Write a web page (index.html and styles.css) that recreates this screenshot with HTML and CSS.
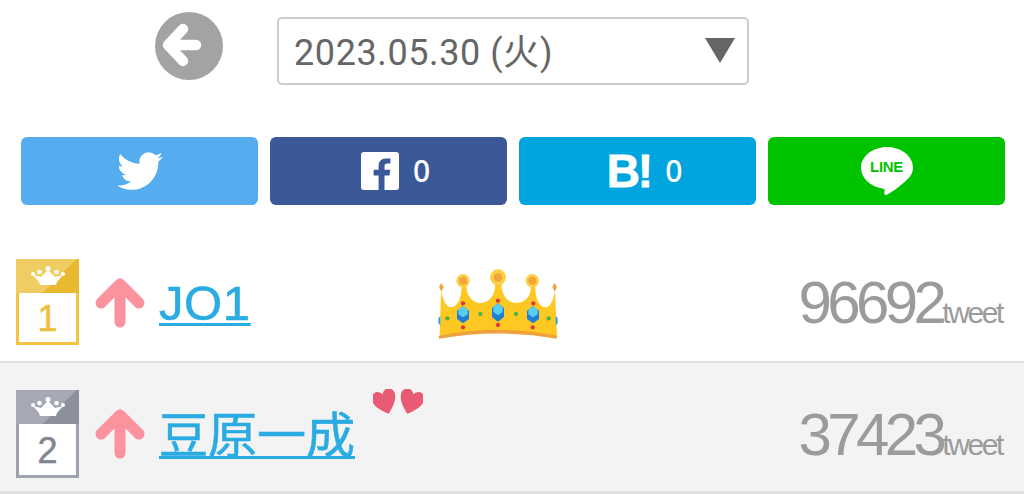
FILE: index.html
```html
<!DOCTYPE html>
<html lang="ja">
<head>
<meta charset="utf-8">
<title>Ranking</title>
<link rel="stylesheet" href="styles.css">
</head>
<body>
<div class="top">
  <svg class="back" viewBox="0 0 68 68"><circle cx="34" cy="34" r="34" fill="#a3a3a3"/><path d="M28 17 13 33l15 16M15 33h26" fill="none" stroke="#fff" stroke-width="10.500" stroke-linecap="round" stroke-linejoin="round"/></svg>
  <div class="select"><span>2023.05.30 (火)</span><i class="caret"></i></div>
</div>
<div class="share">
  <a class="btn tw"><svg class="bird" viewBox="0 0 24 24"><path fill="#fff" d="M23.953 4.57a10 10 0 01-2.825.775 4.958 4.958 0 002.163-2.723c-.951.555-2.005.959-3.127 1.184a4.92 4.92 0 00-8.384 4.482C7.69 8.095 4.067 6.13 1.64 3.162a4.822 4.822 0 00-.666 2.475c0 1.71.87 3.213 2.188 4.096a4.904 4.904 0 01-2.228-.616v.06a4.923 4.923 0 003.946 4.827 4.996 4.996 0 01-2.212.085 4.936 4.936 0 004.604 3.417 9.867 9.867 0 01-6.102 2.105c-.39 0-.779-.023-1.17-.067a13.995 13.995 0 007.557 2.209c9.053 0 13.998-7.496 13.998-13.985 0-.21 0-.42-.015-.63A9.935 9.935 0 0024 4.59z"/></svg></a>
  <a class="btn fb count-btn"><svg class="fbicon" viewBox="0 0 38 38"><rect width="38" height="38" rx="3" fill="#fff"/><path fill="#3b5998" d="M26.500 38V23.500h5l.8-5.800h-5.800v-3.500c0-1.700.5-2.800 2.900-2.800h3V6.600c-.6-.1-2.400-.2-4.400-.2-4.400 0-7.400 2.700-7.400 7.500v3.800h-5v5.800h5V38z" transform="translate(-3 0)"/></svg><span class="num">0</span></a>
  <a class="btn hb count-btn"><span class="hatena">B!</span><span class="num">0</span></a>
  <a class="btn ln"><span class="bubble"><svg class="bubble-bg" viewBox="0 0 52 50"><path fill="#fff" d="M26 0C11.600 0 0 9.300 0 20.800c0 10.300 9.200 19 21.600 20.600 2 .4 2.300 1.300 1.900 3.200-.2 1-.8 4.400 2.300 3.100 3.100-1.300 14-8.700 19.500-14.500C49.700 29.700 52 25.500 52 20.800 52 9.300 40.400 0 26 0z"/></svg><span class="line-text">LINE</span></span></a>
</div>
<div class="row first">
  <div class="badge gold"><div class="badge-top"><svg class="mini" viewBox="0 0 34 20"><path fill="#fff" d="M9 19h16l1-3 6-7-8 2-7-7-7 7-8-2 6 7z"/><circle cx="17" cy="2.500" r="2.500" fill="#fff"/><circle cx="8.500" cy="6" r="2.300" fill="#fff"/><circle cx="25.500" cy="6" r="2.300" fill="#fff"/><circle cx="2" cy="8" r="2" fill="#fff"/><circle cx="32" cy="8" r="2" fill="#fff"/></svg></div><div class="badge-num">1</div></div>
  <svg class="arrow" viewBox="0 0 50 50"><path d="M25 44V6M6 25 25 6l19 19" fill="none" stroke="#fb929e" stroke-width="11" stroke-linecap="round" stroke-linejoin="round"/></svg>
  <a class="name latin">JO1</a>
  <svg class="crown" viewBox="55 40 360 210">
    <path fill="#fcc821" d="M60 245 64 105C70 130 78 155 95 155 115 155 128 120 125 90L140 90C140 120 160 142 183 142 210 142 228 115 226 85L245 85C245 115 262 142 290 142 315 142 338 120 332 90L347 90C345 125 358 155 378 155 392 155 402 130 406 105L412 245Q235 210 60 245Z"/>
    <path fill="#f0a03c" d="M58 240Q235 205 412 240L412 249Q235 218 58 249Z"/>
    <circle cx="130" cy="75" r="20" fill="#fbd044"/><circle cx="130" cy="75" r="12" fill="#f2a53c"/>
    <circle cx="235" cy="65" r="24" fill="#fbd044"/><circle cx="235" cy="65" r="13" fill="#f2a53c"/>
    <circle cx="338" cy="75" r="20" fill="#fbd044"/><circle cx="338" cy="75" r="12" fill="#f2a53c"/>
    <path fill="#f2a53c" d="M65 82l7 12-7 14-7-14zM405 82l7 12-7 14-7-14z"/>
    <path fill="#1f7fd6" d="M130 152l18 13v25l-18 13-18-13v-25zM235 143l18 14v27l-18 14-18-14v-27zM340 152l18 13v25l-18 13-18-13v-25z"/>
    <path fill="#58cdf2" d="M130 152l14 10v14l-14 9-14-9v-14zM235 143l14 11v15l-14 10-14-10v-15zM340 152l14 10v14l-14 9-14-9v-14z"/>
    <path fill="#2fa6e0" d="M62 180l-6 8v14l6 8zM408 180l6 8v14l-6 8z"/>
    <g fill="#e03a40"><circle cx="130" cy="143" r="6.500"/><circle cx="235" cy="135" r="6.500"/><circle cx="341" cy="143" r="6.500"/><circle cx="130" cy="215" r="6.500"/><circle cx="235" cy="208" r="6.500"/><circle cx="339" cy="215" r="6.500"/></g>
    <g fill="#52b440"><circle cx="83" cy="188" r="6.500"/><circle cx="182" cy="175" r="6.500"/><circle cx="289" cy="175" r="6.500"/><circle cx="387" cy="188" r="6.500"/></g>
  </svg>
  <div class="count"><span class="big">96692</span><span class="unit">tweet</span></div>
</div>
<div class="row alt">
  <div class="badge silver"><div class="badge-top"><svg class="mini" viewBox="0 0 34 20"><path fill="#fff" d="M9 19h16l1-3 6-7-8 2-7-7-7 7-8-2 6 7z"/><circle cx="17" cy="2.500" r="2.500" fill="#fff"/><circle cx="8.500" cy="6" r="2.300" fill="#fff"/><circle cx="25.500" cy="6" r="2.300" fill="#fff"/><circle cx="2" cy="8" r="2" fill="#fff"/><circle cx="32" cy="8" r="2" fill="#fff"/></svg></div><div class="badge-num">2</div></div>
  <svg class="arrow" viewBox="0 0 50 50"><path d="M25 44V6M6 25 25 6l19 19" fill="none" stroke="#fb929e" stroke-width="11" stroke-linecap="round" stroke-linejoin="round"/></svg>
  <a class="name">豆原一成</a>
  <svg class="hearts" viewBox="0 0 50 26"><g fill="#e95a74"><path transform="rotate(-18 12 13) translate(0 1) scale(.48 .54)" d="M25 45C5 30 0 20 0 12 0 4 7 0 13 0 18 0 22 3 25 7 28 3 32 0 37 0 43 0 50 4 50 12 50 20 45 30 25 45Z"/><path transform="rotate(18 38 13) translate(26 1) scale(.48 .54)" d="M25 45C5 30 0 20 0 12 0 4 7 0 13 0 18 0 22 3 25 7 28 3 32 0 37 0 43 0 50 4 50 12 50 20 45 30 25 45Z"/></g></svg>
  <div class="count"><span class="big">37423</span><span class="unit">tweet</span></div>
</div>
</body>
</html>
```

FILE: styles.css
```css
* { box-sizing: border-box; }
html, body { margin: 0; padding: 0; }
body {
  width: 1024px;
  height: 494px;
  overflow: hidden;
  background: #fff;
  font-family: "Liberation Sans", "Noto Sans CJK JP", sans-serif;
}
.top {
  display: flex;
  align-items: flex-start;
  padding: 12px 0 0 155px;
  height: 137px;
}
.back { width: 68px; height: 68px; flex: none; }
.select {
  margin: 5px 0 0 54px;
  width: 472px;
  height: 68px;
  border: 2px solid #ccc;
  border-radius: 5px;
  background: #fff;
  display: flex;
  align-items: center;
  justify-content: space-between;
  padding: 0 12px 5px 15px;
  color: #666;
  font-family: Roboto, "Noto Sans CJK JP", sans-serif;
  font-size: 36px;
  letter-spacing: 0.6px;
}
.caret {
  width: 0;
  height: 0;
  margin-top: 3px;
  border-left: 15px solid transparent;
  border-right: 15px solid transparent;
  border-top: 25px solid #666;
}
.share {
  display: grid;
  grid-template-columns: repeat(4, 1fr);
  gap: 12px;
  padding: 0 19px 0 21px;
}
.btn {
  height: 68px;
  border-radius: 6px;
  display: flex;
  align-items: center;
  justify-content: center;
  color: #fff;
}
.count-btn { padding-left: 14px; }
.tw { background: #55acee; }
.fb { background: #3b5998; }
.hb { background: #00a4de; }
.ln { background: #00c300; }
.bird { width: 46px; height: 46px; }
.fbicon { width: 38px; height: 38px; }
.num {
  margin-left: 14px;
  font-family: "Noto Sans", sans-serif;
  font-size: 30px;
  font-weight: 500;
  line-height: 1;
}
.hatena {
  font-family: "Liberation Sans", sans-serif;
  font-weight: 700;
  font-size: 46px;
  line-height: 1;
  letter-spacing: -2px;
  -webkit-text-stroke: 0.8px #fff;
}
.bubble {
  position: relative;
  width: 52px;
  height: 50px;
  display: flex;
  justify-content: center;
  margin-top: 2px;
}
.bubble-bg { width: 52px; height: 50px; }
.line-text {
  position: absolute;
  top: 11px;
  left: 0;
  right: 0;
  text-align: center;
  color: #00c300;
  font-size: 15px;
  font-weight: 700;
  letter-spacing: -0.3px;
  line-height: 18px;
}
.row {
  display: flex;
  align-items: flex-start;
  height: 132px;
  padding: 28px 22px 0 16px;
  border-bottom: 2px solid #e0e0e0;
}
.first { margin-top: 26px; }
.alt {
  background: #f3f3f3;
  border-bottom-width: 3px;
  height: 131px;
  padding-top: 27px;
}
.badge {
  width: 63px;
  height: 86px;
  flex: none;
  border: 3px solid;
  background: #fff;
  display: flex;
  flex-direction: column;
}
.alt .badge { height: 88px; }
.gold { border-color: #f1c542; }
.silver { border-color: #9ea2ae; }
.badge-top {
  height: 34px;
  margin: -3px -3px 0;
  display: flex;
  justify-content: center;
  align-items: flex-start;
  padding-top: 7px;
  flex: none;
}
.gold .badge-top { background: linear-gradient(135deg, #f0cd63 0 62%, #e9ba30 62%); }
.silver .badge-top { background: linear-gradient(135deg, #a6a9b4 0 62%, #8c8f9c 62%); }
.mini { width: 34px; height: 20px; }
.badge-num {
  flex: 1;
  display: flex;
  align-items: center;
  justify-content: center;
  font-size: 36px;
  line-height: 1;
  padding-top: 2px;
  -webkit-text-stroke: 0.5px currentColor;
}
.gold .badge-num { color: #eebf3c; }
.silver .badge-num { color: #82868f; }
.arrow { width: 50px; height: 50px; margin: 19px 0 0 16px; flex: none; }
.name {
  margin: 18px 0 0 14px;
  color: #2aabe2;
  font-size: 49px;
  line-height: 52px;
  text-decoration: underline;
  text-decoration-thickness: 3px;
  text-underline-offset: 3px;
  -webkit-text-stroke: 0.6px #2aabe2;
}
.latin { letter-spacing: 0.6px; }
.alt .name { margin-top: 20px; }
.crown { width: 120px; height: 70px; margin: 10px 0 0 187px; flex: none; }
.hearts { width: 50px; height: 26px; margin: -1px 0 0 18px; flex: none; }
.count {
  margin-left: auto;
  margin-top: 14px;
  color: #9b9b9b;
  white-space: nowrap;
  line-height: 60px;
}
.alt .count { margin-top: 15px; }
.big { font-size: 60px; letter-spacing: -4.6px; }
.unit { font-size: 30px; letter-spacing: -2.4px; }
```
